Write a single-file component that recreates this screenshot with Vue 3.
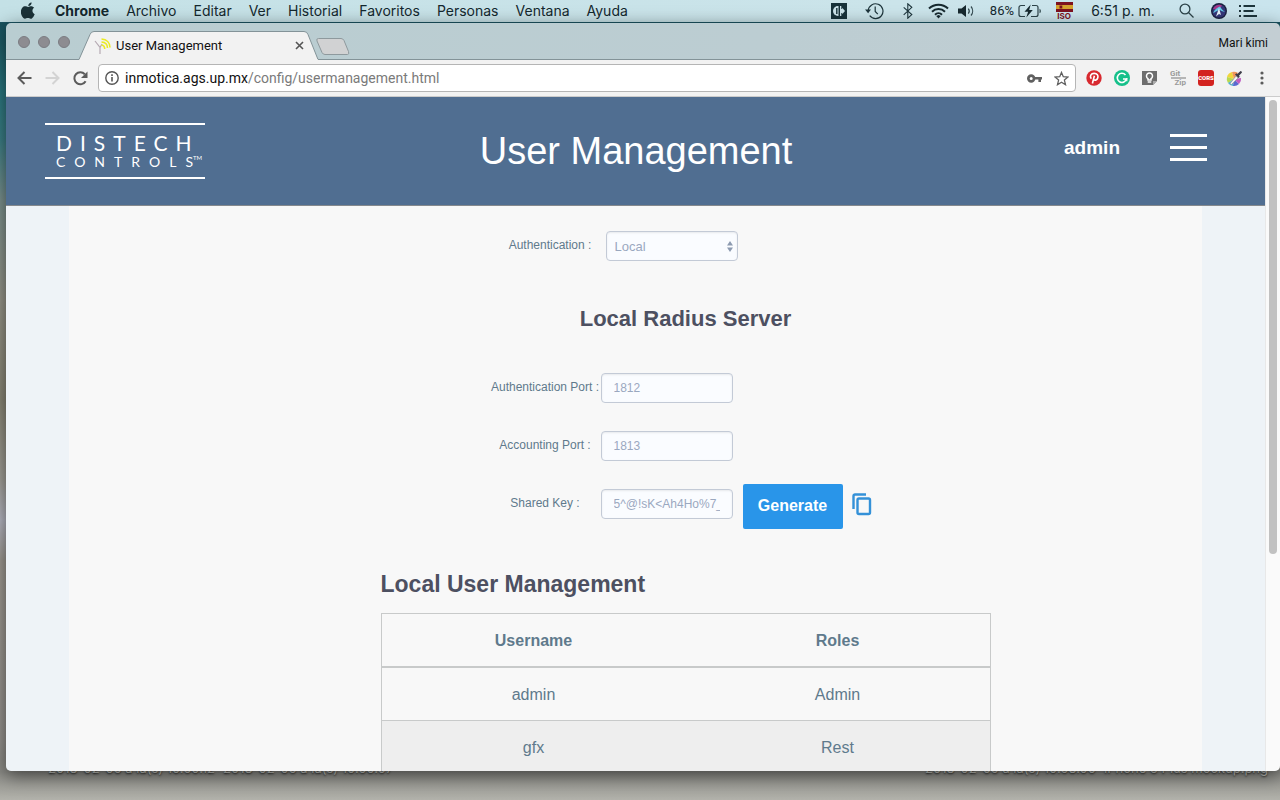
<script setup>
import { ref } from 'vue'

const menus = ['Archivo', 'Editar', 'Ver', 'Historial', 'Favoritos', 'Personas', 'Ventana', 'Ayuda']
const auth = ref('Local')
const authPort = ref('1812')
const accountingPort = ref('1813')
const sharedKey = ref('5^@!sK<Ah4Ho%7_q')
const users = [
  { name: 'admin', role: 'Admin' },
  { name: 'gfx', role: 'Rest' }
]
</script>

<template>
  <div class="desktop">
    <header class="menubar">
      <nav class="menus">
        <svg class="apple" width="15" height="17" viewBox="0 0 15 17"><path d="M10.6 0.4c.1 1-.3 1.900-.9 2.600-.6.7-1.500 1.200-2.400 1.100-.1-.9.4-1.900.9-2.500.6-.7 1.600-1.200 2.400-1.200zM13.700 12.300c-.4.9-.6 1.300-1.100 2.100-.7 1.100-1.700 2.400-2.900 2.400-1.100 0-1.400-.7-2.800-.7-1.500 0-1.800.7-2.900.7-1.200 0-2.100-1.200-2.800-2.300C-.7 11.500-.5 7.600 1.300 5.700c.8-.9 1.800-1.400 2.900-1.400 1.200 0 2 .7 3 .7s1.600-.7 3-.7c1 0 2.200.6 3 1.500-2.600 1.500-2.200 5.400.5 6.500z" fill="#1b3238"/></svg>
        <b>Chrome</b>
        <span v-for="m in menus" :key="m">{{ m }}</span>
      </nav>
      <div class="status">
        <svg width="16" height="16" viewBox="0 0 16 16"><path fill="#17323a" d="M0 0h16v16H0z"/><path d="M7.500 3H7a5 5 0 0 0 0 10h.5z" fill="#cbe3ea"/><path d="M5.800 5v6" stroke="#17323a" stroke-width="1.400"/><path d="M9 3h1.300v3h.9V4.800l2.800 3.200-2.800 3.200V10h-.9v3H9z" fill="#cbe3ea"/></svg>
        <svg width="19" height="18" viewBox="0 0 19 18" fill="none" stroke="#1d343b" stroke-width="1.200"><path d="M3.200 8.500a7.400 7.400 0 1 1 1.500 5.200"/><path d="M10.200 4.500v5l2.600 2.700"/><path d="M0 7.600h6l-2.900 3.600z" fill="#1d343b" stroke="none"/></svg>
        <svg width="10" height="16" viewBox="0 0 10 16" fill="none" stroke="#1d343b" stroke-width="1.100"><path d="M.7 4.300l8.100 7.300-4 3.600V.8l4 3.500-8.100 7.500"/></svg>
        <svg width="21" height="16" viewBox="0 0 21 16" fill="none" stroke="#17292f" stroke-width="2"><path d="M1 5.500a13.600 13.600 0 0 1 19 0M4 8.700a9.300 9.300 0 0 1 13 0M7 11.700a5 5 0 0 1 7 0"/><path d="M8.200 13l2.300-1 2.300 1-2.300 2.400z" fill="#17292f" stroke="none"/></svg>
        <svg width="18" height="14" viewBox="0 0 18 14"><path d="M0 4.500h3.500L8 1v12L3.500 9.500H0z" fill="#17292f"/><path d="M10.300 4.500a4 4 0 0 1 0 5M13 2.500a7 7 0 0 1 0 9" fill="none" stroke="#33494f" stroke-width="1.200"/></svg>
        <span class="percent">86%</span>
        <svg width="24" height="14" viewBox="0 0 24 14"><path d="M7 1.500H3A2 2 0 0 0 1 3.500v7a2 2 0 0 0 2 2h4M14 1.500h4a2 2 0 0 1 2 2v7a2 2 0 0 1-2 2h-5" fill="none" stroke="#2c4248" stroke-width="1.200"/><path d="M12.700.5L6.500 7.800h3.600L8.300 13.500l6.500-7.500h-3.600z" fill="#17292f"/><path d="M21.500 4.700c1.800.6 1.800 4 0 4.600z" fill="#2c4248"/></svg>
        <span class="flag">
          <svg width="17" height="10" viewBox="0 0 17 10"><path fill="#7d1220" d="M0 0h17v10H0z"/><path fill="#d6a32e" d="M0 3h17v4H0z"/><path fill="#7d1220" d="M3.500 3.500h2.800v3H3.500z"/></svg>
          <small>ISO</small>
        </span>
        <span class="clock">6:51 p. m.</span>
        <svg width="15" height="15" viewBox="0 0 15 15" fill="none" stroke="#2c4248" stroke-width="1.300"><circle cx="6" cy="6" r="4.900"/><path d="M9.500 9.500l5 5"/></svg>
        <svg width="16" height="16" viewBox="0 0 16 16"><circle cx="8" cy="8" r="8" fill="#1a2140"/><circle cx="8" cy="8" r="6.600" fill="#34377a"/><path d="M2 6a6.500 6.500 0 0 1 9-3.500L8 7z" fill="#a5388b"/><path d="M2 10c2-4 5-6 7-6.500 1 2 3 4 5 5.500-2.500-.5-3.500-1-5-2-2 0-4 1.500-7 3z" fill="#63c7e6"/><path d="M8 5l2 7-2-1-3 2.500z" fill="#e8f3fb"/></svg>
        <svg width="18" height="12" viewBox="0 0 18 12" stroke="#1d343b" stroke-width="2"><path d="M4.500 1H16M4.500 6h10M4.500 11H18M0 1h2M0 6h2M0 11h2"/></svg>
      </div>
    </header>

    <div class="files left"><span>2018-02-05 a la(s) 10.50.12</span><span>2018-02-05 a la(s) 10.50.57</span></div>
    <div class="files right"><span>2018-02-05 a la(s) 10.58.00</span><span>iPhone 6 Plus mockup.png</span></div>

    <main class="window">
      <div class="tabstrip">
        <div class="lights"><button aria-label="Cerrar"></button><button aria-label="Minimizar"></button><button aria-label="Ampliar"></button></div>
        <div class="tab">
          <svg class="tabshape" width="242" height="29" viewBox="0 0 242 29"><path d="M0 28.500h1L12 3.500q1-3 4-3H226q3 0 4 3l10 25h2V29H0z" fill="#f2f2f2"/><path d="M0 28.500h1L12 3.500q1-3 4-3H226q3 0 4 3l10 25h2" fill="none" stroke="#839398"/><path d="M2 28.500h237.500" stroke="#f2f2f2"/></svg>
          <svg class="fav" width="17" height="18" viewBox="0 0 17 18" fill="none"><path d="M1 4l5 6.500V17M6 10.500l2-3.500" stroke="#b5a9b2" stroke-width="1.200"/><g stroke="#eaea25" stroke-width="1.600"><path d="M7.500 8c2.200.3 3.200 1.500 3.200 4M7.500 5c4 .3 6 2.500 6 6M7.500 2c5.500.3 8.500 4 8.500 8.500"/></g></svg>
          <span class="tabname">User Management</span>
          <button class="close" aria-label="Cerrar pestaña"><svg width="9" height="9" viewBox="0 0 9 9"><path d="M1 1l7 7M8 1L1 8" stroke="#555" stroke-width="1.600"/></svg></button>
        </div>
        <button class="newtab" aria-label="Nueva pestaña"><svg width="34" height="17" viewBox="0 0 34 17"><path d="M2.500.5H25q2 0 3 2l4.500 11q1 3-1 3H9q-2 0-3-2L1 3Q0 .5 2.500.5z" fill="#d1d2d3" stroke="#8e999d"/></svg></button>
        <span class="profile">Mari kimi</span>
      </div>

      <div class="toolbar">
        <button class="tool" aria-label="Atrás"><svg width="15" height="14" viewBox="0 0 15 14" fill="none" stroke="#5b5b5b" stroke-width="2"><path d="M14.500 7H2M7.500 1L1.500 7l6 6"/></svg></button>
        <button class="tool" aria-label="Adelante"><svg width="15" height="14" viewBox="0 0 15 14" fill="none" stroke="#d3d3d3" stroke-width="2"><path d="M.5 7H13M7.500 1l6 6-6 6"/></svg></button>
        <button class="tool" aria-label="Recargar"><svg width="15" height="15" viewBox="0 0 15 15"><path d="M12.600 10.200A6 6 0 1 1 11.800 3.200" fill="none" stroke="#5b5b5b" stroke-width="2"/><path d="M14.500.5V7H8z" fill="#5b5b5b"/></svg></button>
        <div class="address">
          <svg width="14" height="14" viewBox="0 0 14 14"><circle cx="7" cy="7" r="6.200" fill="none" stroke="#555" stroke-width="1.400"/><path d="M7 6v4.500M7 3.300v1.600" stroke="#555" stroke-width="1.600"/></svg>
          <div class="url" role="textbox" aria-label="Dirección" contenteditable="true" spellcheck="false"><span class="host">inmotica.ags.up.mx</span>/config/usermanagement.html</div>
          <svg width="15" height="9" viewBox="0 0 15 9"><path d="M4.200.3a4.200 4.200 0 1 1 0 8.400 4.200 4.200 0 0 1 0-8.400zm0 2.700a1.500 1.500 0 1 0 0 3 1.500 1.500 0 0 0 0-3z" fill="#606060" fill-rule="evenodd"/><path d="M8 3h7v2.600h-1V8h-2.600V5.600H8z" fill="#606060"/></svg>
          <svg width="15" height="15" viewBox="0 0 15 15"><path d="M7.500 1.400l1.800 4.300 4.700.4-3.600 3 1.100 4.600-4-2.500-4 2.500 1.100-4.600-3.600-3 4.700-.4z" fill="none" stroke="#606060" stroke-width="1.300"/></svg>
        </div>
        <button class="tool" aria-label="Pinterest"><svg width="16" height="16" viewBox="0 0 16 16"><circle cx="8" cy="8" r="7.700" fill="#d8292f"/><path d="M5.300 8.800C3.300 6 5 3.400 8.200 3.400c3 0 4.300 2 3.600 4.300-.6 2.300-2.800 3.100-4 1.900M8.400 5.800L6.400 13.500" fill="none" stroke="#fff" stroke-width="1.600"/></svg></button>
        <button class="tool" aria-label="Grammarly"><svg width="16" height="16" viewBox="0 0 16 16"><circle cx="8" cy="8" r="8" fill="#15c08a"/><path d="M11.500 5A4.600 4.600 0 1 0 12.400 9H9" fill="none" stroke="#fff" stroke-width="1.600"/><path d="M12.800 8v3.200" stroke="#fff" stroke-width="1.200"/></svg></button>
        <button class="tool" aria-label="Keep"><svg width="16" height="16" viewBox="0 0 16 16"><path d="M0 1h15v10l-4 4H0z" fill="#6e6e6e"/><path d="M15 11h-4v4z" fill="#aaa"/><path d="M6 10V8.600a3 3 0 1 1 3 0V10z" fill="none" stroke="#fff" stroke-width="1.500"/><path d="M5.700 12h3.600" stroke="#fff" stroke-width="1.500"/></svg></button>
        <button class="tool gitzip" aria-label="GitZip"><span>Git</span><i></i><span class="zip">Zip</span></button>
        <button class="tool" aria-label="CORS"><span class="cors">CORS</span></button>
        <button class="tool" aria-label="ColorZilla"><svg width="17" height="17" viewBox="0 0 17 17"><circle cx="8" cy="9" r="7.300" fill="#eceaf0"/><path d="M8 9L1 7a7.200 7.200 0 0 1 5-5z" fill="#f1d63a"/><path d="M8 9L6 2a7.200 7.200 0 0 1 6 1z" fill="#f0955a"/><path d="M8 9L1 7a7.200 7.200 0 0 0 1 6z" fill="#b9d94d"/><path d="M8 9l-6 4a7 7 0 0 0 5 3z" fill="#4bb5d8"/><path d="M8 9l-1 7a7 7 0 0 0 6-2z" fill="#5a6ad0"/><path d="M8 9l5 5a7 7 0 0 0 2-6z" fill="#c05bc0"/><path d="M4 13.500l6-7.500 2 2-6.500 6.500z" fill="#f3f3f3" stroke="#888" stroke-width=".6"/><path d="M9 4.500L12.500 8l1.300-1.300-.8-.9 3-3.200Q16 1 14.500 1L11.300 4l-.9-.8z" fill="#3d3d48"/></svg></button>
        <button class="tool" aria-label="Menú"><svg width="4" height="14" viewBox="0 0 4 14" fill="#5b5b5b"><circle cx="2" cy="2" r="1.600"/><circle cx="2" cy="7" r="1.600"/><circle cx="2" cy="12" r="1.600"/></svg></button>
      </div>

      <div class="viewport">
        <div class="page">
          <header class="banner">
            <div class="logo">
              <div class="distech">DISTECH</div>
              <div class="controls"><span>CONTROL</span>S<sup>TM</sup></div>
            </div>
            <h1>User Management</h1>
            <div class="account"><span class="who">admin</span><button class="burger" aria-label="Menu"><i></i><i></i><i></i></button></div>
          </header>
          <div class="content">
            <section class="panel">
              <div class="row top">
                <label for="auth">Authentication :</label>
                <div class="selectwrap">
                  <select id="auth" v-model="auth"><option>Local</option><option>Radius</option></select>
                  <svg width="6" height="11" viewBox="0 0 6 11" fill="#8c9ab0"><path d="M0 4.500L3 0l3 4.500zM0 6.500h6L3 11z"/></svg>
                </div>
              </div>
              <h2 class="centered">Local Radius Server</h2>
              <div class="row"><label for="ap">Authentication Port :</label><input id="ap" v-model="authPort" type="text"></div>
              <div class="row"><label for="cp">Accounting Port :</label><input id="cp" v-model="accountingPort" type="text"></div>
              <div class="row">
                <label for="sk">Shared Key :</label><input id="sk" v-model="sharedKey" type="text">
                <button class="generate">Generate</button>
                <button class="copy" aria-label="Copy"><svg width="20" height="23" viewBox="0 0 20 23" fill="none" stroke="#3491d8" stroke-width="2.400"><path d="M14 1.500H3a1.500 1.500 0 0 0-1.500 1.500V16"/><rect x="5.500" y="5.500" width="12.500" height="15.500" rx="1.500"/></svg></button>
              </div>
              <h2 class="users">Local User Management</h2>
              <table>
                <thead><tr><th scope="col">Username</th><th scope="col">Roles</th></tr></thead>
                <tbody><tr v-for="u in users" :key="u.name"><td>{{ u.name }}</td><td>{{ u.role }}</td></tr></tbody>
              </table>
            </section>
          </div>
        </div>
        <div class="scrollbar"><div class="thumb"></div></div>
      </div>
    </main>
  </div>
</template>

<style>
body { margin: 0; overflow: hidden; }
</style>

<style scoped>
* { box-sizing: border-box; }
button { border: 0; padding: 0; background: none; font: inherit; color: inherit; }
svg { display: block; flex: none; }
.desktop {
  position: relative;
  display: flex;
  flex-direction: column;
  height: 100vh;
  overflow: hidden;
  font-family: Roboto, "Liberation Sans", sans-serif;
  background: linear-gradient(#17505c 20px, #2a7880 90px, #3c7f86 140px, #7c928f 200px, #97968a 300px, #8b8877 400px, #a3a19a 480px, #b7b8c4 520px, #a09b93 560px, #96938f 740px, #8b8b86 772px, #b2b2ab 800px);
}
.menubar {
  display: flex;
  flex: none;
  justify-content: space-between;
  align-items: center;
  height: 23px;
  padding: 0 23px 1px 21px;
  font-family: Inter, Roboto, sans-serif;
  font-size: 14px;
  color: #14282e;
  background: linear-gradient(90deg, #c4e1e6, #cbe4ea 70%, #c9e4ed);
  border-bottom: 1px solid #1b5462;
}
.menus { display: flex; gap: 17px; align-items: center; white-space: nowrap; }
.apple { margin-right: 2px; }
.status {
  display: grid;
  grid-template-columns: 34px 36px 32px 28px 30px 35px 26px 42px 76px 50px 16px 42px;
  justify-items: center;
  align-items: center;
  margin-right: -12px;
  white-space: nowrap;
}
.percent { justify-self: end; padding-right: 3px; font-family: Roboto, sans-serif; font-size: 13px; }
.flag { display: flex; flex-direction: column; align-items: center; margin-top: 1px; }
.flag small { font-size: 8px; line-height: 8px; font-weight: 700; color: #7d1220; }

.files { position: absolute; top: 760px; display: flex; gap: 8px; font-family: Inter, sans-serif; font-size: 13px; line-height: 16px; color: #c4c5c0; text-shadow: 0 1px 2px #222; white-space: nowrap; }
.files.left { left: 48px; }
.files.right { right: 12px; }

.window {
  position: relative;
  display: flex;
  flex: 1;
  flex-direction: column;
  min-height: 0;
  margin: 0 0 29px 6px;
  overflow: hidden;
  border-radius: 5px;
  box-shadow: 0 4px 18px rgba(0, 0, 0, .55);
}
.tabstrip {
  display: flex;
  flex: none;
  height: 37px;
  padding: 8px 12px 0;
  background: linear-gradient(90deg, #b9cdd1, #bccdd2 60%, #c3ced3);
  border-bottom: 1px solid #839398;
}
.lights { display: flex; gap: 8px; width: 60px; padding-top: 5px; }
.lights button { width: 12px; height: 12px; border: 1px solid #7b7c82; border-radius: 50%; background: #8d8c91; }
.tab { position: relative; display: flex; align-items: center; width: 242px; height: 29px; padding: 0 16px; }
.tabshape { position: absolute; inset: 0; }
.fav, .tabname, .close { position: relative; }
.tabname { flex: 1; margin-left: 5px; font-size: 13px; color: #111; }
.newtab { width: 34px; height: 17px; margin: 7px 0 0 -4px; }
.profile { margin-left: auto; font-size: 12px; line-height: 24px; color: #111; }

.toolbar { display: flex; flex: none; align-items: center; height: 37px; padding: 0 4px; background: #f2f2f2; border-bottom: 1px solid #ccc; }
.tool { display: flex; flex: none; align-items: center; justify-content: center; width: 28px; height: 28px; }
.address { display: flex; flex: 1; align-items: center; height: 28px; margin: 0 4px; padding: 0 6px; background: #fff; border: 1px solid #b5b5b5; border-radius: 4px; }
.url { flex: 1; margin-left: 6px; font-size: 14px; color: #7a7a7a; outline: 0; }
.host { color: #111; }
.address svg + svg { margin-left: 12px; }
.gitzip { flex-direction: column; font-size: 8px; line-height: 7px; font-weight: 700; color: #9a9a9a; }
.gitzip i { width: 15px; height: 2px; background: #b5b5b5; }
.gitzip span { width: 16px; text-align: left; }
.gitzip .zip { text-align: right; }
.cors { width: 16px; border-radius: 3px; background: #d3231f; color: #fff; font-size: 6px; line-height: 16px; font-weight: 900; text-align: center; }

.viewport { display: flex; flex: 1; min-height: 0; overflow: hidden; font-family: "Liberation Sans", Arial, sans-serif; }
.page { display: flex; flex: 1; flex-direction: column; background: #eef3f7; overflow: hidden; }
.banner {
  display: grid;
  flex: none;
  grid-template-columns: 1fr auto 1fr;
  align-items: center;
  height: 109px;
  padding: 0 58px 0 39px;
  color: #fff;
  background: #506e91;
  border-bottom: 1px solid #85898d;
}
.logo { width: 160px; height: 56px; padding: 7px 0 0 11px; border-top: 2px solid #fff; border-bottom: 2px solid #fff; font-family: Lato, sans-serif; white-space: nowrap; }
.distech { font-size: 21px; line-height: 22px; letter-spacing: 8px; }
.controls { display: flex; font-size: 14px; line-height: 16px; }
.controls span { letter-spacing: 9px; }
.controls sup { font-size: 6px; line-height: 8px; }
h1 { margin: 0 0 0 20px; font-size: 38px; line-height: 44px; font-weight: 400; }
.account { display: flex; align-items: center; justify-content: flex-end; gap: 50px; padding-bottom: 7px; }
.who { font-size: 19px; font-weight: 700; }
.burger { display: grid; gap: 9px; width: 37px; }
.burger i { height: 3px; background: #fff; }

.content { flex: 1 0 auto; margin: 0 5%; padding: 11px 0 0 100px; background: #f8f8f8; }
.panel { max-width: 610px; margin: 0 auto; color: #5f7a8c; }
.row { display: flex; align-items: center; height: 58px; padding-left: 109px; font-size: 12px; }
.row.top { padding-left: 114px; }
label { width: 111px; padding-bottom: 2px; text-align: center; white-space: nowrap; }
input, select { display: block; width: 132px; height: 30px; padding: 0 12px; font: 12px "Liberation Sans", Arial, sans-serif; color: #9aa8bf; background: #fafcff; border: 1px solid #c3cad6; border-radius: 4px; box-shadow: inset 0 1px 2px rgba(0, 0, 0, .08); }
select { padding: 0 8px; font-size: 13px; appearance: none; }
.selectwrap { position: relative; }
.selectwrap svg { position: absolute; top: 10px; right: 5px; }
h2 { margin: 0; font-size: 23px; line-height: 28px; color: #4d5061; }
.centered { margin: 30px 0 26px; font-size: 22px; text-align: center; }
.users { margin: 37px 0 15px; }
.generate { width: 100px; height: 45px; margin: 4px 9px 0 10px; font-size: 16px; font-weight: 700; color: #fff; background: #2995e9; border-radius: 2px; }
table { width: 100%; border-collapse: separate; border-spacing: 0; table-layout: fixed; border: 1px solid #c8caca; font-size: 16px; }
th, td { height: 53px; padding: 2px 0 0; text-align: center; border-bottom: 1px solid #c8caca; }
th { height: 54px; border-bottom-width: 2px; }
tbody tr:nth-child(even) { background: #eee; }
.scrollbar { flex: none; width: 15px; padding: 3px 3px 0; background: #fafafa; border-left: 1px solid #e8e8e8; }
.thumb { width: 8px; height: 454px; border-radius: 4px; background: #c1c1c1; }
</style>
